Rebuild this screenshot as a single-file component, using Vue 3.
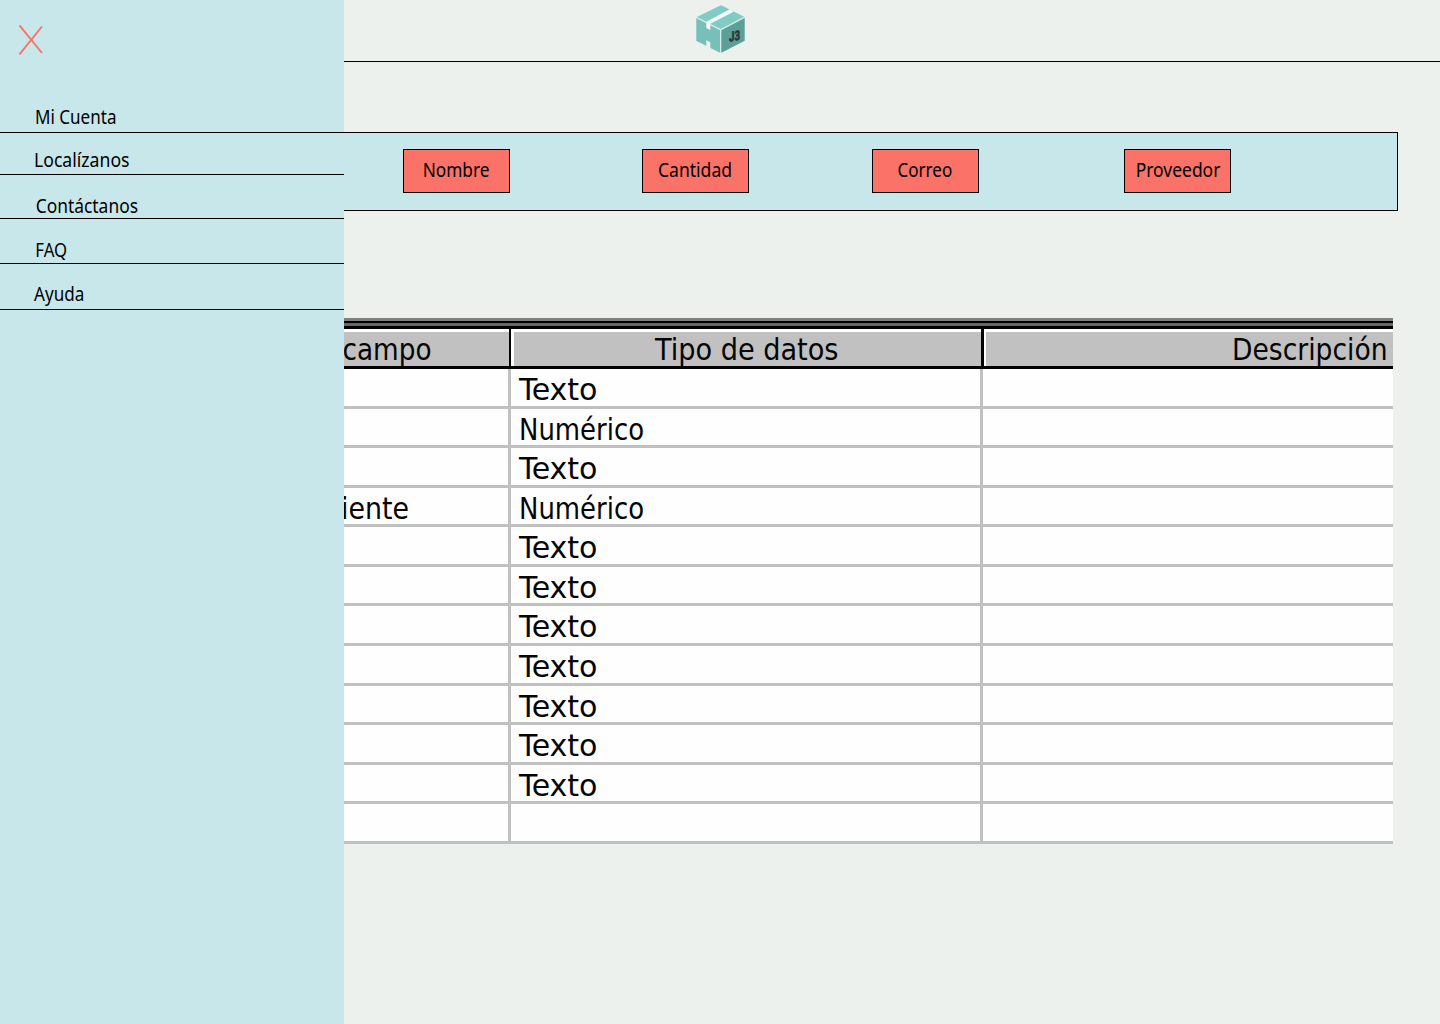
<script setup>
const menu = [
  { label: 'Mi Cuenta', x: 35, width: 81.5, base: 124.3, height: 63 },
  { label: 'Localízanos', x: 34, width: 95.5, base: 167, height: 42 },
  { label: 'Contáctanos', x: 35.7, width: 102.3, base: 213, height: 44 },
  { label: 'FAQ', x: 35.3, width: 31.7, base: 257, height: 45 },
  { label: 'Ayuda', x: 34, width: 50.3, base: 301.3, height: 46 },
]
let bottom = 70
for (const item of menu) {
  item.y = item.base - bottom
  bottom += item.height
}

const filters = [
  { label: 'Nombre', gap: 0, x: 18.7, width: 66.8 },
  { label: 'Cantidad', gap: 132, x: 15, width: 74 },
  { label: 'Correo', gap: 123, x: 24.5, width: 54.7 },
  { label: 'Proveedor', gap: 145, x: 10.7, width: 84.7 },
]

const texto = { label: 'Texto', width: 78.5 }
const numerico = { label: 'Numérico', width: 125 }
const rows = [
  { type: texto }, { type: numerico }, { type: texto },
  { type: numerico, field: 'iente' },
  { type: texto }, { type: texto }, { type: texto }, { type: texto },
  { type: texto }, { type: texto }, { type: texto }, {},
]
</script>

<template>
  <div class="page">
    <header class="topbar">
      <svg class="logo" width="70" height="60" viewBox="0 0 210 180">
        <path d="M33 51 108 14 180 50 180 123 107 160 33 123Z" fill="#d3ece9" />
        <path d="M36 51 108 16 177 50 107 87Z" fill="#80cbc4" />
        <path d="M34 55 105 91 105 158 34 122Z" fill="#77bfb8" />
        <path d="M109 91 179 54 179 122 109 158Z" fill="#5c9f98" />
        <path d="M64 65 134 28 146 35 76 71 76 90 64 84Z" fill="#f3faf8" />
        <path d="M64 121 76 127 76 146 64 140Z" fill="#edf2ef" />
        <text x="0" y="0" transform="translate(132 125) skewY(-9)" textLength="33" lengthAdjust="spacingAndGlyphs" class="mark">J3</text>
      </svg>
    </header>

    <section class="filters">
      <button v-for="f in filters" :key="f.label" class="filter" :style="{ marginLeft: f.gap + 'px' }">
        <svg width="105" height="42">
          <text class="ui" :x="f.x" y="27.2" :textLength="f.width" lengthAdjust="spacingAndGlyphs">{{ f.label }}</text>
        </svg>
      </button>
    </section>

    <section class="table">
      <div class="frame"></div>
      <div class="head">
        <div class="cell first">
          <svg width="165" height="34"><text class="grid-text" x="-1.5" y="28" textLength="89" lengthAdjust="spacingAndGlyphs">campo</text></svg>
        </div>
        <div class="cell second">
          <svg width="467" height="34"><text class="grid-text" x="141" y="28" textLength="183.5" lengthAdjust="spacingAndGlyphs">Tipo de datos</text></svg>
        </div>
        <div class="cell third">
          <svg width="405" height="34"><text class="grid-text" x="246" y="28" textLength="155.5" lengthAdjust="spacingAndGlyphs">Descripción</text></svg>
        </div>
      </div>
      <div class="body">
        <div v-for="(row, i) in rows" :key="i" class="row">
          <div class="cell first">
            <svg v-if="row.field" width="165" height="36"><text class="grid-text" x="-3" y="30.7" textLength="68" lengthAdjust="spacingAndGlyphs">{{ row.field }}</text></svg>
          </div>
          <div class="cell second">
            <svg v-if="row.type" width="467" height="36"><text class="grid-text" x="8" y="30.7" :textLength="row.type.width" lengthAdjust="spacingAndGlyphs">{{ row.type.label }}</text></svg>
          </div>
          <div class="cell third"></div>
        </div>
      </div>
    </section>

    <aside class="drawer">
      <div class="drawer-top">
        <svg class="close" width="60" height="70" viewBox="0 0 60 70">
          <path d="M19.5 25.3 42 53M42 26.5 19.5 54.3" fill="none" stroke="#fa7268" stroke-width="1.9" />
        </svg>
      </div>
      <nav>
        <a v-for="item in menu" :key="item.label" class="item" :style="{ height: item.height + 'px' }">
          <svg width="344" :height="item.height - 1">
            <text class="ui" :x="item.x" :y="item.y" :textLength="item.width" lengthAdjust="spacingAndGlyphs">{{ item.label }}</text>
          </svg>
        </a>
      </nav>
    </aside>
  </div>
</template>

<style>
body { margin: 0; background: #ecf1ee; }
</style>

<style scoped>
* { box-sizing: border-box; }
svg { display: block; overflow: visible; }
.page { position: relative; width: 1440px; height: 1024px; overflow: hidden; background: #ecf1ee; }
.topbar { height: 62px; border-bottom: 1px solid #000; padding-left: 685px; }
.mark { font: 900 41px "Roboto", sans-serif; fill: #2b3837; stroke: #2b3837; stroke-width: 1.5px; }
.ui { font: 400 20px "Noto Sans", sans-serif; fill: #000; }
.filters {
  display: flex; align-items: flex-start; width: 1398px; height: 79px; margin-top: 70px;
  padding: 16px 0 0 403px; background: #c8e7eb; border: 1px solid #000; border-left: 0;
}
.filter { flex: none; width: 107px; height: 44px; padding: 0; background: #fa7268; border: 1px solid #000; border-radius: 0; }
.table { width: 1049px; height: 526px; margin: 107px 0 0 344px; }
.frame { height: 11px; background: linear-gradient(#808080 0 3px, #000 3px 5px, #666 5px 8px, #000 8px); }
.head { display: flex; height: 40px; background: #c1c1c1; border-bottom: 3px solid #000; }
.head .cell { border-top: 3px solid #fff; }
.head .second, .head .third { border-left: 3px solid #fff; }
.head .first, .head .second { position: relative; box-shadow: 3px 0 0 #000; z-index: 1; }
.head .first { width: 165px; margin-right: 2px; }
.head .second { width: 470px; margin-right: 2px; }
.head .third { width: 410px; }
.body { display: flex; flex-direction: column; height: 475px; background: #fefefe; }
.row { display: flex; flex: 1; border-bottom: 3px solid #c0c0c0; }
.row .first { width: 167px; border-right: 3px solid #c0c0c0; }
.row .second { width: 472px; border-right: 3px solid #c0c0c0; }
.row .third { flex: 1; }
.grid-text { font: 400 30px "DejaVu Sans Condensed", "DejaVu Sans", sans-serif; fill: #050505; }
.drawer { position: absolute; z-index: 3; left: 0; top: 0; width: 344px; height: 1024px; background: #c8e7eb; }
.drawer-top { height: 70px; }
.item { display: block; border-bottom: 1px solid #000; }
</style>
